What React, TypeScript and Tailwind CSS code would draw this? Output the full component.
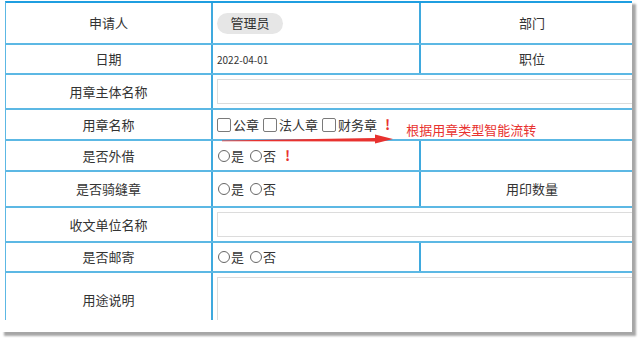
import React from "react";

const FONT = { fontFamily: '"Noto Sans CJK SC", "Noto Sans", sans-serif' };

const LABEL =
  "w-[207px] shrink-0 border-r-2 border-[#3fa9de] flex items-center justify-center text-[13px] text-[#333]";
const MID = "w-[208px] shrink-0 border-r-2 border-[#3fa9de] flex items-center";
const RIGHT = "w-[222px] shrink-0 flex items-center justify-center text-[13px] text-[#333]";
const ROW = "flex border-b-2 border-[#5cb8e4]";

function Radio({ label }: { label: string }) {
  return (
    <span className="flex items-center">
      <span className="w-[12px] h-[12px] rounded-full border border-[#666] bg-white" />
      <span className="ml-[1px] text-[13px] text-[#333]">{label}</span>
    </span>
  );
}

function Check({ label }: { label: string }) {
  return (
    <span className="flex items-center">
      <span className="w-[14px] h-[14px] rounded-[2px] border border-[#7a7a7a] bg-white" />
      <span className="ml-[2px] text-[13px] text-[#333]">{label}</span>
    </span>
  );
}

function YesNo({ mark }: { mark?: boolean }) {
  return (
    <div className="flex items-center pl-[5px] gap-[6px]">
      <Radio label="是" />
      <Radio label="否" />
      {mark && <span className="ml-[3px] text-[14px] font-bold text-[#e8322f]">!</span>}
    </div>
  );
}

export default function App() {
  return (
    <div className="w-[640px] h-[345px] bg-white overflow-hidden" style={FONT}>
      <div className="w-[632px] h-[332px] bg-white shadow-[4px_4px_2px_rgba(0,0,0,0.35)] pt-[1px] pl-[5px]">
        <div className="w-[627px] h-[319px] overflow-hidden relative">
          <div className="w-[640px] border-t-2 border-l border-t-[#1f9ee0] border-l-[#5cb8e4]">
            {/* Row 1 */}
            <div className={`${ROW} h-[42px]`}>
              <div className={LABEL}>申请人</div>
              <div className={MID}>
                <span className="ml-[4px] w-[66px] h-[21px] rounded-full bg-[#e6e6e6] flex items-center justify-center text-[13px] text-[#333]">
                  管理员
                </span>
              </div>
              <div className={RIGHT}>部门</div>
            </div>
            {/* Row 2 */}
            <div className={`${ROW} h-[30px]`}>
              <div className={LABEL}>日期</div>
              <div className={MID}>
                <span className="ml-[4px] text-[10px] text-[#333]">2022-04-01</span>
              </div>
              <div className={RIGHT}>职位</div>
            </div>
            {/* Row 3 */}
            <div className={`${ROW} h-[35px]`}>
              <div className={LABEL}>用章主体名称</div>
              <div className="flex items-center">
                <div className="ml-[4px] w-[440px] h-[25px] border border-[#dcdcdc] bg-white" />
              </div>
            </div>
            {/* Row 4 */}
            <div className={`${ROW} h-[31px]`}>
              <div className={LABEL}>用章名称</div>
              <div className="flex items-center pl-[4px] gap-[4px]">
                <Check label="公章" />
                <Check label="法人章" />
                <Check label="财务章" />
                <span className="ml-[4px] text-[14px] font-bold text-[#e8322f]">!</span>
                <span className="ml-[12px] translate-y-[5px] text-[13px] text-[#e8322f]">
                  根据用章类型智能流转
                </span>
              </div>
            </div>
            {/* Row 5 */}
            <div className={`${ROW} h-[31px]`}>
              <div className={LABEL}>是否外借</div>
              <div className={MID}>
                <YesNo mark />
              </div>
              <div className={RIGHT}></div>
            </div>
            {/* Row 6 */}
            <div className={`${ROW} h-[36px]`}>
              <div className={LABEL}>是否骑缝章</div>
              <div className={MID}>
                <YesNo />
              </div>
              <div className={RIGHT}>用印数量</div>
            </div>
            {/* Row 7 */}
            <div className={`${ROW} h-[35px]`}>
              <div className={LABEL}>收文单位名称</div>
              <div className="flex items-center">
                <div className="ml-[4px] w-[440px] h-[25px] border border-[#dcdcdc] bg-white" />
              </div>
            </div>
            {/* Row 8 */}
            <div className={`${ROW} h-[30px]`}>
              <div className={LABEL}>是否邮寄</div>
              <div className={MID}>
                <YesNo />
              </div>
              <div className={RIGHT}></div>
            </div>
            {/* Row 9 */}
            <div className="flex h-[80px]">
              <div className="w-[207px] shrink-0 border-r-2 border-[#3fa9de] flex justify-center pt-[17px] text-[13px] text-[#333]">
                用途说明
              </div>
              <div className="flex items-start pt-[4px]">
                <div className="ml-[4px] w-[440px] h-[70px] border border-[#dcdcdc] bg-white" />
              </div>
            </div>
          </div>
          {/* Red arrow */}
          <svg
            className="absolute left-[215px] top-[128px]"
            width="180"
            height="18"
            viewBox="0 0 180 18"
          >
            <polygon
              points="2,11.5 155,9 155,5.5 173,10 155,14.5 155,12.5 2,12.2"
              fill="#e8322f"
            />
          </svg>
        </div>
      </div>
    </div>
  );
}
